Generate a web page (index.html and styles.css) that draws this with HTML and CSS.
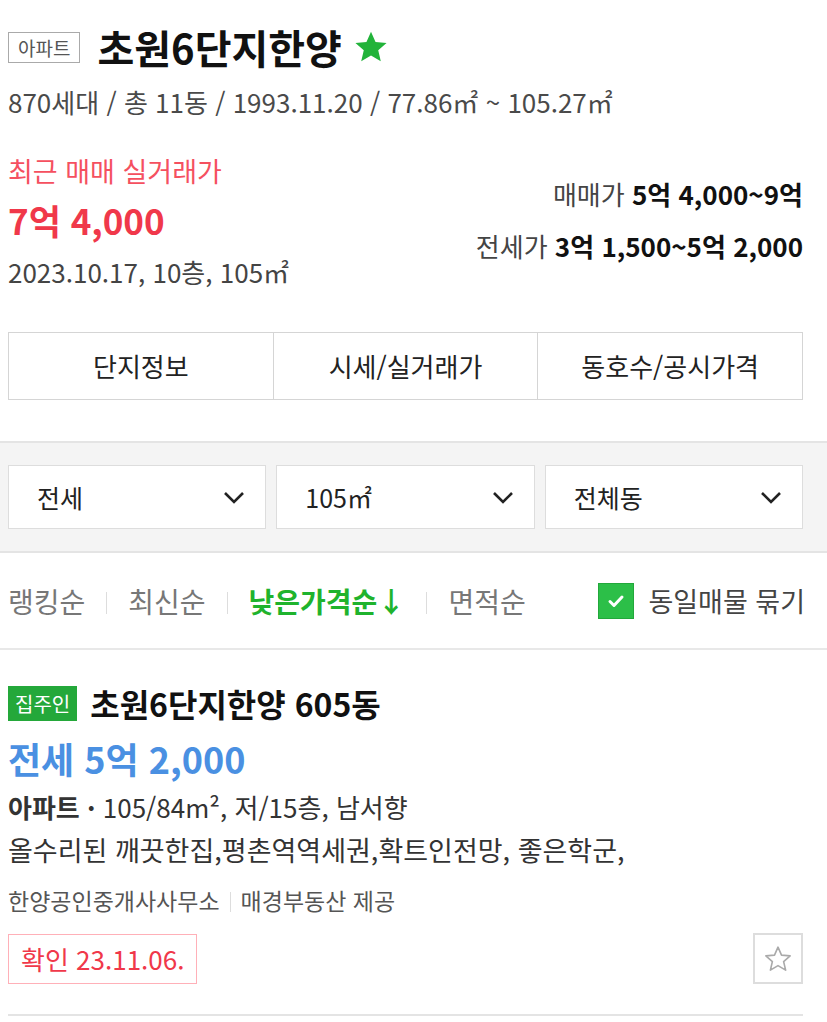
FILE: index.html
```html
<!DOCTYPE html>
<html lang="ko">

<head>
    <meta charset="UTF-8">
    <meta name="viewport" content="width=device-width, initial-scale=1.0">
    <title>초원6단지한양</title>
    <link rel="stylesheet" href="styles.css">
</head>

<body>
    <div class="summary">
        <div class="title-row">
            <span class="type-badge">아파트</span>
            <h1 class="complex-name">초원6단지한양</h1>
            <svg class="fav-star" viewBox="0 0 24 24" width="34" height="34">
                <path d="M12 1.2l3.2 7.2 7.8.7-5.9 5.2 1.8 7.7L12 18l-6.9 4 1.8-7.7L1 9.1l7.8-.7z" fill="#22b33a" />
            </svg>
        </div>
        <p class="complex-meta">870세대 / 총 11동 / 1993.11.20 / 77.86㎡ ~ 105.27㎡</p>

        <div class="price-area">
            <div class="recent-deal">
                <p class="deal-label">최근 매매 실거래가</p>
                <p class="deal-price">7억 4,000</p>
                <p class="deal-info">2023.10.17, 10층, 105㎡</p>
            </div>
            <div class="price-range">
                <p>매매가 <strong>5억 4,000~9억</strong></p>
                <p>전세가 <strong>3억 1,500~5억 2,000</strong></p>
            </div>
        </div>

        <div class="tab-menu">
            <a class="tab-item">단지정보</a>
            <a class="tab-item">시세/실거래가</a>
            <a class="tab-item">동호수/공시가격</a>
        </div>
    </div>

    <div class="filter-bar">
        <div class="filter-select">전세
            <svg class="chevron" viewBox="0 0 22 13" width="22" height="13"><path d="M2 2l9 9 9-9" fill="none" stroke="#222" stroke-width="2.6" /></svg>
        </div>
        <div class="filter-select">105㎡
            <svg class="chevron" viewBox="0 0 22 13" width="22" height="13"><path d="M2 2l9 9 9-9" fill="none" stroke="#222" stroke-width="2.6" /></svg>
        </div>
        <div class="filter-select">전체동
            <svg class="chevron" viewBox="0 0 22 13" width="22" height="13"><path d="M2 2l9 9 9-9" fill="none" stroke="#222" stroke-width="2.6" /></svg>
        </div>
    </div>

    <div class="sort-bar">
        <ul class="sort-list">
            <li>랭킹순</li>
            <li>최신순</li>
            <li class="active">낮은가격순↓</li>
            <li>면적순</li>
        </ul>
        <label class="group-check">
            <span class="check-box">
                <svg viewBox="0 0 20 20" width="20" height="20">
                    <path d="M4 10.5l4 4 8-8.5" fill="none" stroke="#fff" stroke-width="3" stroke-linecap="round" stroke-linejoin="round" />
                </svg>
            </span>
            동일매물 묶기
        </label>
    </div>

    <div class="article">
        <div class="article-title">
            <span class="owner-badge">집주인</span>
            <h2>초원6단지한양 605동</h2>
        </div>
        <p class="article-price">전세 5억 2,000</p>
        <p class="article-spec"><strong>아파트 ·</strong> 105/84m², 저/15층, 남서향</p>
        <p class="article-desc">올수리된 깨끗한집,평촌역역세권,확트인전망, 좋은학군,</p>
        <p class="article-agent"><span>한양공인중개사사무소</span><span>매경부동산 제공</span></p>
        <div class="article-bottom">
            <span class="confirm-tag">확인 23.11.06.</span>
            <button class="like-btn" type="button">
                <svg viewBox="0 0 24 24" width="30" height="30">
                    <path d="M12 2.5l2.8 6.4 6.9.6-5.2 4.6 1.6 6.8L12 17.3l-6.1 3.6 1.6-6.8-5.2-4.6 6.9-.6z" fill="none" stroke="#aaa" stroke-width="1.3" stroke-linejoin="round" />
                </svg>
            </button>
        </div>
    </div>
</body>

</html>
```

FILE: styles.css
```css
body {
    font-family: "Noto Sans CJK KR", "Noto Sans", sans-serif;
    color: #222;
    background-color: #fff;
    margin: 0;
    padding: 0;
}

p {
    margin: 0;
}

.summary {
    padding: 24px 24px 41px 8px;
}

.title-row {
    display: flex;
    align-items: center;
}

.type-badge {
    border: 1px solid #aaa;
    color: #555;
    font-size: 19px;
    line-height: 29px;
    padding: 0 9px;
}

.complex-name {
    margin: 0 12px 0 17px;
    font-size: 40px;
    line-height: 46px;
    font-weight: 700;
    color: #111;
}

.complex-meta {
    margin-top: 15px;
    font-size: 26px;
    line-height: 34px;
    color: #4a4a4a;
}

.price-area {
    display: flex;
    justify-content: space-between;
    margin-top: 35px;
}

.deal-label {
    font-size: 27px;
    line-height: 34px;
    color: #f5505f;
}

.deal-price {
    margin-top: 10px;
    font-size: 35px;
    line-height: 44px;
    font-weight: 700;
    color: #f0384a;
}

.deal-info {
    margin-top: 13px;
    font-size: 26px;
    line-height: 34px;
    color: #444;
}

.price-range {
    text-align: right;
    padding-top: 23px;
    font-size: 26px;
    line-height: 34px;
    color: #444;
}

.price-range p + p {
    margin-top: 18px;
}

.price-range strong {
    color: #111;
}

.tab-menu {
    display: flex;
    margin-top: 43px;
    border: 1px solid #d5d5d5;
}

.tab-item {
    flex: 1;
    text-align: center;
    font-size: 26px;
    line-height: 66px;
    color: #222;
}

.tab-item + .tab-item {
    border-left: 1px solid #d5d5d5;
}

.filter-bar {
    display: flex;
    gap: 10px;
    padding: 22px 24px 22px 8px;
    background-color: #f4f4f4;
    border-top: 2px solid #e4e4e4;
    border-bottom: 2px solid #e4e4e4;
}

.filter-select {
    flex: 1;
    display: flex;
    justify-content: space-between;
    align-items: center;
    height: 64px;
    box-sizing: border-box;
    padding: 0 20px 0 28px;
    background-color: #fff;
    border: 1px solid #ddd;
    font-size: 25px;
    color: #222;
}

.sort-bar {
    display: flex;
    justify-content: space-between;
    align-items: center;
    padding: 0 22px 0 8px;
    height: 95px;
    border-bottom: 2px solid #e8e8e8;
}

.sort-list {
    display: flex;
    align-items: center;
    list-style: none;
    margin: 0;
    padding: 0;
    font-size: 28px;
    color: #777;
}

.sort-list li + li::before {
    content: "";
    display: inline-block;
    vertical-align: middle;
    width: 1px;
    height: 22px;
    background-color: #ddd;
    margin: 0 21px 4px 21px;
}

.sort-list .active {
    color: #1fb32d;
    font-weight: 700;
}

.group-check {
    display: flex;
    align-items: center;
    gap: 14px;
    font-size: 27px;
    color: #444;
}

.check-box {
    display: flex;
    align-items: center;
    justify-content: center;
    width: 34px;
    height: 34px;
    background-color: #2cbf48;
    border: 1px solid #22a83b;
}

.article {
    margin: 0 24px 0 8px;
    padding: 35px 0 30px;
    border-bottom: 2px solid #e4e4e4;
}

.article-title {
    display: flex;
    align-items: center;
    gap: 13px;
}

.owner-badge {
    background-color: #24a83a;
    color: #fff;
    font-size: 20px;
    line-height: 35px;
    padding: 0 7px;
}

.article-title h2 {
    margin: 0;
    font-size: 32px;
    line-height: 36px;
    font-weight: 700;
    color: #111;
}

.article-price {
    margin-top: 15px;
    font-size: 36px;
    line-height: 44px;
    font-weight: 700;
    color: #4a90e2;
}

.article-spec {
    margin-top: 10px;
    font-size: 26px;
    line-height: 34px;
    color: #333;
}

.article-desc {
    margin-top: 9px;
    font-size: 27px;
    line-height: 34px;
    color: #333;
}

.article-agent {
    margin-top: 16px;
    font-size: 23px;
    line-height: 34px;
    color: #555;
}

.article-agent span + span::before {
    content: "";
    display: inline-block;
    vertical-align: middle;
    width: 1px;
    height: 20px;
    background-color: #ddd;
    margin: 0 10px 4px 10px;
}

.article-bottom {
    display: flex;
    justify-content: space-between;
    align-items: center;
    margin-top: 16px;
}

.confirm-tag {
    border: 1px solid #ffb0b8;
    color: #f0384a;
    font-size: 26px;
    line-height: 48px;
    padding: 0 12px;
}

.like-btn {
    display: flex;
    align-items: center;
    justify-content: center;
    width: 50px;
    height: 51px;
    padding: 0;
    background-color: #fff;
    border: 2px solid #ddd;
}
```
